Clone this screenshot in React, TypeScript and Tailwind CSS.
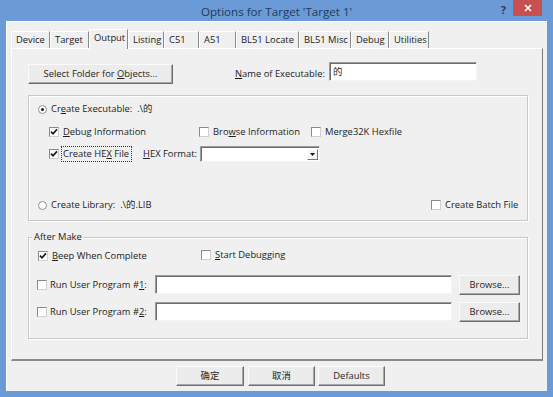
import React from "react";

function U({ children }: { children: React.ReactNode }) {
  return <span className="underline underline-offset-[1px] decoration-[1px]">{children}</span>;
}

function Check({ checked }: { checked?: boolean }) {
  return (
    <span className="inline-flex w-[10px] h-[10px] shrink-0 items-center justify-center bg-white border border-[#8a8a8a] border-b-[#d0d0d0] border-r-[#d0d0d0]">
      {checked && (
        <svg width="8" height="8" viewBox="0 0 8 8">
          <path d="M1 3.6 L3 5.8 L7 1.4" stroke="#1a1a1a" strokeWidth="1.7" fill="none" />
        </svg>
      )}
    </span>
  );
}

function Radio({ checked }: { checked?: boolean }) {
  return (
    <span className="inline-flex w-[9px] h-[9px] shrink-0 rounded-full items-center justify-center bg-white border border-[#8e8e8e]">
      {checked && <span className="w-[3px] h-[3px] rounded-full bg-[#1a1a1a]" />}
    </span>
  );
}

function Btn({ children, className }: { children: React.ReactNode; className?: string }) {
  return (
    <div
      className={
        "flex items-center justify-center whitespace-nowrap bg-[#ececec] border border-t-[#fbfbfb] border-l-[#fbfbfb] border-r-[#6e6e6e] border-b-[#6e6e6e] shadow-[inset_-1px_-1px_0_#a8a8a8] text-[#1e1e1e] " +
        (className || "")
      }
    >
      {children}
    </div>
  );
}

function Input({ className, children }: { className?: string; children?: React.ReactNode }) {
  return (
    <div
      className={
        "bg-white border border-[#9c9c9c] border-b-[#f4f4f4] border-r-[#f4f4f4] shadow-[inset_1px_1px_0_#6c6c6c] flex items-center " +
        (className || "")
      }
    >
      {children}
    </div>
  );
}

const tabs: { label: string; w: number; sel?: boolean }[] = [
  { label: "Device", w: 39 },
  { label: "Target", w: 39 },
  { label: "Output", w: 39, sel: true },
  { label: "Listing", w: 36 },
  { label: "C51", w: 35 },
  { label: "A51", w: 37 },
  { label: "BL51 Locate", w: 63 },
  { label: "BL51 Misc", w: 52 },
  { label: "Debug", w: 38 },
  { label: "Utilities", w: 40 },
];

export default function App() {
  return (
    <div className="w-[553px] h-[397px] bg-[#6b9bd6] flex flex-col [font-family:'Open_Sans','Noto_Sans_CJK_SC',sans-serif] text-[9.4px] leading-none text-[#1c1c1c] overflow-hidden whitespace-nowrap">
      {/* Title bar */}
      <div className="h-[21px] grid grid-cols-[1fr_auto_1fr] shrink-0">
        <div />
        <div className="pt-[6px] text-[11.6px] text-[#1f3a5c]">Options for Target 'Target 1'</div>
        <div className="flex justify-end items-start">
          <div className="mt-[4px] mr-[7px] text-[11px] font-bold text-[#2b3f5a]">?</div>
          <div className="w-[29px] h-[16px] mr-[11px] bg-[#c75050] flex items-center justify-center">
            <svg width="8" height="8" viewBox="0 0 8 8">
              <path d="M1 1 L7 7 M7 1 L1 7" stroke="white" strokeWidth="1.6" />
            </svg>
          </div>
        </div>
      </div>

      {/* Body */}
      <div className="mx-[6px] h-[370px] bg-[#f0f0f0] pl-[4px] pt-[7px] border-t border-l border-white">
        {/* Tabs */}
        <div className="flex items-end h-[19px]">
          {tabs.map((t) =>
            t.sel ? (
              <div
                key={t.label}
                className="h-[20px] -mb-[1px] relative z-10 bg-[#f0f0f0] border-t border-l border-white border-r border-r-[#8a8a8a] flex items-start pt-[3px] pl-[4px]"
                style={{ width: t.w }}
              >
                {t.label}
              </div>
            ) : (
              <div
                key={t.label}
                className="h-[17px] border-t border-l border-white border-r border-r-[#8a8a8a] flex items-start pt-[3px] pl-[4px]"
                style={{ width: t.w }}
              >
                {t.label}
              </div>
            )
          )}
        </div>

        {/* Panel */}
        <div className="w-[532px] h-[313px] border-t border-l border-white border-r border-r-[#7a7a7a] border-b-2 border-b-[#8a8a8a] pl-[16px] pt-[13px]">
          {/* Row 1 */}
          <div className="flex items-start h-[21px]">
            <Btn className="w-[145px] h-[20px] mt-[2px]">
              Select Folder for&nbsp;<U>O</U>bjects...
            </Btn>
            <div className="ml-[62px] w-[94px] mt-[7px]">
              <U>N</U>ame of Executable:
            </div>
            <Input className="w-[148px] h-[19px] pl-[3px]">
              <span>的</span>
            </Input>
          </div>

          {/* Group 1 */}
          <div className="mt-[12px] w-[500px] h-[126px] border border-[#c8c8c8] shadow-[inset_1px_1px_0_#fff,1px_1px_0_#fff] pt-[5px]">
            <div className="h-[16px] flex items-center pl-[9px]">
              <Radio checked />
              <span className="ml-[4px]">
                Cr<U>e</U>ate Executable:&nbsp;&nbsp;.\的
              </span>
            </div>
            <div className="h-[16px] mt-[7px] flex items-center pl-[20px]">
              <div className="w-[150px] flex items-center">
                <Check checked />
                <span className="ml-[4px]">
                  <U>D</U>ebug Information
                </span>
              </div>
              <div className="w-[112px] flex items-center">
                <Check />
                <span className="ml-[4px]">
                  Bro<U>w</U>se Information
                </span>
              </div>
              <div className="flex items-center">
                <Check />
                <span className="ml-[4px]">Merge32K Hexfile</span>
              </div>
            </div>
            <div className="h-[16px] mt-[6px] flex items-center pl-[20px]">
              <Check checked />
              <span className="ml-[2px] w-[71px] px-[1px] py-[2px] border border-dotted border-[#333]">
                Create HE<U>X</U> File
              </span>
              <span className="ml-[11px] w-[57px]">
                <U>H</U>EX Format:
              </span>
              <Input className="w-[120px] h-[16px] justify-end pr-[1px]">
                <div className="w-[11px] h-[11px] bg-[#f4f4f4] border border-t-white border-l-white border-r-[#777] border-b-[#777] flex items-center justify-center">
                  <svg width="5" height="3" viewBox="0 0 5 3">
                    <path d="M0 0 L5 0 L2.5 3 Z" fill="#111" />
                  </svg>
                </div>
              </Input>
            </div>
            <div className="h-[16px] mt-[35px] flex items-center pl-[9px]">
              <Radio />
              <span className="ml-[4px] w-[380px]">Create Library:&nbsp;&nbsp;.\的.LIB</span>
              <Check />
              <span className="ml-[4px]">Create Batch File</span>
            </div>
          </div>

          {/* Group 2 */}
          <div className="relative mt-[16px] w-[500px] h-[102px] border border-[#c8c8c8] shadow-[inset_1px_1px_0_#fff,1px_1px_0_#fff] pt-[10px]">
            <span className="absolute -top-[6px] left-[3px] bg-[#f0f0f0] px-[2px]">After Make</span>
            <div className="h-[16px] flex items-center pl-[9px]">
              <div className="w-[163px] flex items-center">
                <Check checked />
                <span className="ml-[4px]">
                  <U>B</U>eep When Complete
                </span>
              </div>
              <div className="flex items-center -mt-[2px]">
                <Check />
                <span className="ml-[4px]">
                  <U>S</U>tart Debugging
                </span>
              </div>
            </div>
            {[1, 2].map((n) => (
              <div key={n} className={"h-[19px] flex items-center pl-[8px] " + (n === 1 ? "mt-[11px]" : "mt-[8px]")}>
                <Check />
                <span className="ml-[3px] w-[105px]">
                  Run User Program #<U>{n}</U>:
                </span>
                <Input className="w-[297px] h-[19px]" />
                <Btn className="ml-[7px] w-[61px] h-[20px]">Browse...</Btn>
              </div>
            ))}
          </div>
        </div>

        {/* Bottom buttons */}
        <div className="flex mt-[5px] ml-[165px]">
          <Btn className="w-[68px] h-[20px]">确定</Btn>
          <Btn className="ml-[4px] w-[67px] h-[20px]">取消</Btn>
          <Btn className="ml-[3px] w-[67px] h-[20px]">Defaults</Btn>
        </div>
      </div>
    </div>
  );
}
